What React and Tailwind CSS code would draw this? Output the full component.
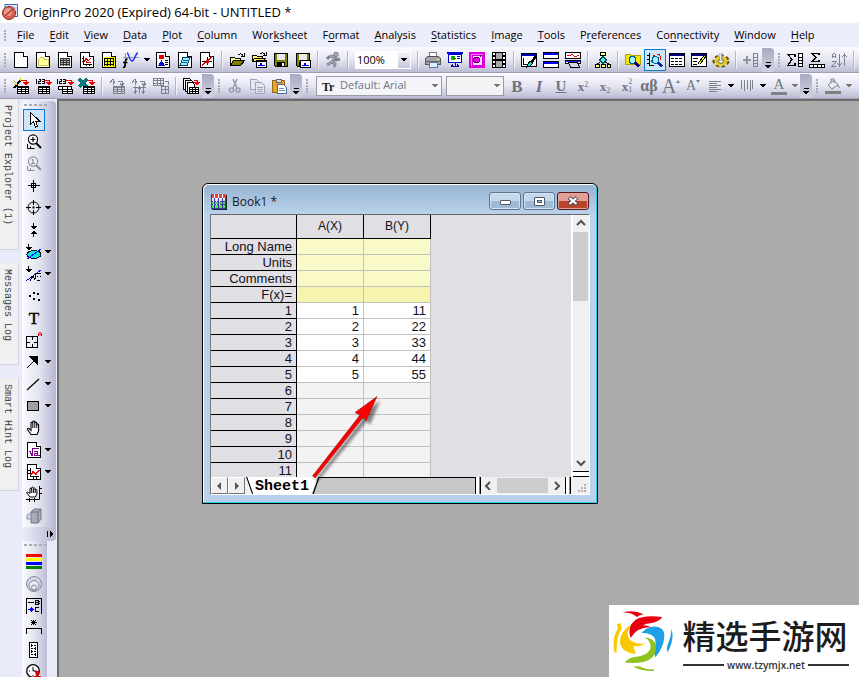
import React, { useState } from "react";
import clsx from "clsx";

const Svg = ({ children, size = 16, smooth = false }) => (
  <svg
    width={size}
    height={size}
    viewBox="0 0 16 16"
    fill="none"
    stroke="#000"
    shapeRendering={smooth ? "auto" : "crispEdges"}
    className="shrink-0 overflow-visible"
    aria-hidden="true"
  >
    {children}
  </svg>
);

const Doc = ({ fill = "#fff" }) => (
  <>
    <path d="M1.5 .5h9l4 4v11h-13z" fill={fill} />
    <path d="M10.5 .5v4h4" fill="#fff" />
  </>
);

const Grid = ({ x = 4, y = 8, fill = "#fff", color = "#000" }) => (
  <>
    <rect x={x + 0.5} y={y + 0.5} width="11" height="7" fill={fill} stroke={color} />
    <path d={`M${x} ${y + 1}h12M${x + 1} ${y + 3.5}h11M${x + 1} ${y + 5.5}h11M${x + 4.5} ${y}v8M${x + 8.5} ${y}v8`} stroke={color} />
  </>
);

const Floppy = () => (
  <>
    <path d="M1.5 1.5h13v13h-12l-1-1z" fill="#808000" />
    <path d="M4 2h8v6H4z" fill="#e8e8f0" stroke="none" />
    <path d="M4 10h8v5H4z" fill="#000" stroke="none" />
    <path d="M9 11h2v3H9z" fill="#fff" stroke="none" />
  </>
);

const Glass = ({ color = "#000", lens = "#fff", sign = "+" }) => (
  <>
    <path d="M10 9l5 5" stroke={color} strokeWidth="2" />
    <circle cx="7" cy="5.5" r="4.6" fill={lens} stroke={color} strokeWidth="1.1" />
    <path d={sign === "+" ? "M4.5 5.5h5M7 3v5" : "M5.5 3.5h1.5v4M5 7.5h4"} stroke={color} strokeWidth="1.2" />
    <path d="M1.5 10v4.5h7M4.5 12v2" stroke={color} />
  </>
);

const RedArrow = ({ x = 0 }) => (
  <>
    <path d={`M${8 + x} 2.5h5.500v2`} stroke="#e00" />
    <path d={`M${10 + x} 4h6l-3 4z`} fill="#e00" stroke="none" />
  </>
);

const g = "#7e828e";

const icons = {
  newProject: <Svg><Doc /></Svg>,
  newFolder: (
    <Svg><Doc /><path d="M3.5 7.5l2-2h3l1 2h4v6h-10z" fill="#ffffa0" stroke="#d2c850" /></Svg>
  ),
  newBook: (
    <Svg><Doc /><path d="M3 6h10v8H3z" fill="#bbb" stroke="none" /><path d="M3 6.5h10M3 8.5h10M3 10.5h10M3 12.5h10M3.5 6v8M6.5 6v8M9.5 6v8M12.5 6v8" stroke="#333" /></Svg>
  ),
  newGraph: (
    <Svg><Doc /><path d="M4.5 4v8.500H13M3 6.500h1M3 9.500h1M7.500 13v1M10.500 13v1" /><path d="M5 10l2-4 2 3 3-3M6 7l2 4 4-1" stroke="#e00000" /></Svg>
  ),
  newMatrix: (
    <Svg><Doc fill="#fff" /><path d="M3 5h11v10H3z" fill="#ffff00" stroke="none" /><path d="M3 6.5h10M3 9.5h10M3 12.5h10M3.5 6v8M6.5 6v8M9.5 6v8M12.5 6v8" /></Svg>
  ),
  newFunction: (
    <Svg smooth>
      <path d="M2.500 1v13M0 5.500h16" stroke="#999" />
      <path d="M4 1c2 0 2 8 5 8s3-8 6-8" stroke="#1030f0" strokeWidth="1.300" />
      <path d="M4.500 7.500c-2-1-2 1-2.200 3l-.3 3c-.3 2-1 2-2 1.500M0 10.500h4.500" strokeWidth="1.700" />
    </Svg>
  ),
  newLayout: (
    <Svg><Doc /><path d="M4 3h5v4H4z" fill="#e00" stroke="none" /><path d="M4 13l2.500-4L9 13z" fill="#00c" stroke="#00c" /><path d="M10 8.500h3M10 10.500h3M10 12.500h3" /></Svg>
  ),
  newNotes: (
    <Svg><Doc /><path d="M6 5.500h7l-3 8H3z" fill="#9feaf4" stroke="#046" /><path d="M6 8h5M5 10h5" stroke="#06a" /></Svg>
  ),
  newImage: (
    <Svg><Doc /><path d="M3 13L13 5" stroke="#e00" strokeWidth="1.500" /><path d="M3 9.500h10M8.500 5v8" /><path d="M7 8h3v3H7z" fill="#e00" stroke="none" /></Svg>
  ),
  open: (
    <Svg><path d="M1.500 13.500v-8h4l1 1h5v3" fill="#ffff88" /><path d="M1.500 13.500l3-5h11l-4 5z" fill="#808000" /><path d="M9 3c2-2 4-1 5 1M15 1v3.500h-3.500" /></Svg>
  ),
  openTemplate: (
    <Svg><path d="M1.500 9.500v-6h4l1 1h5v5" fill="#ffff88" /><path d="M1.500 9.500l2-3h11l-2 3z" fill="#ffe860" /><path d="M9 2c2-2 4-1 5 1M15 0v3.500h-3" /><path d="M5.500 8.500h10v7h-10z" fill="#fff" /><path d="M5 9h11" /><path d="M7 13h2v-2h1v2h4" stroke="#00f" /></Svg>
  ),
  save: <Svg><Floppy /></Svg>,
  saveTemplate: (
    <Svg><Floppy /><path d="M5.500 8.500h10v7h-10z" fill="#fff" /><path d="M7 13h2v-2h1v2h4" stroke="#00f" /></Svg>
  ),
  run: (
    <Svg smooth><circle cx="11" cy="2.500" r="2.300" fill="#aaaebb" stroke={g} /><path d="M5 4l5 1-3 5 3 2-1 3M7 10l-5 3M10 5l1 3 4-1M5 4L2 7" stroke={g} strokeWidth="3" /><path d="M5 4l5 1-3 5 3 2-1 3M7 10l-5 3" stroke="#aaaebb" /></Svg>
  ),
  print: (
    <Svg><path d="M4.500 .5h7v6h-7z" fill="#fff" stroke="#777" /><path d="M.5 6.500l2-2h11l2 2v6H.5z" fill="#a5a5aa" stroke="#555" /><path d="M1 9h14" stroke="#666" /><path d="M4 10h8v5.500H4z" fill="#d8f0ff" stroke="#67a" /><path d="M12 7.500h2" stroke="#ff0" /></Svg>
  ),
  slides: (
    <Svg><path d="M0 1h16" stroke="#00c" strokeWidth="2" /><path d="M1.500 2h13v8h-13z" fill="#fff" stroke="#0000c0" /><circle cx="6" cy="6" r="2.500" fill="#0b0" stroke="none" /><path d="M6 3.500v2.500h2.500" stroke="#e00" /><path d="M10 4.500h3M10 6.500h3" stroke="#00c" /><path d="M8 10v4M4 14.500h8M6 12l-2 3M10 12l2 3" stroke="#0000a0" /></Svg>
  ),
  snapshot: (
    <Svg><path d="M1 1h14v14H1z" fill="#f7f" stroke="#e000e0" strokeWidth="2" /><path d="M3 3h10v10H3z" fill="#ffd8ff" stroke="#c0c" /><circle cx="7.500" cy="8" r="3" fill="#e000e0" stroke="#505" /><path d="M11 3v2" stroke="#505" /></Svg>
  ),
  film: (
    <Svg><path d="M1 0h14v16H1z" fill="#000" stroke="none" /><path d="M5 1h6v6H5zM5 9h6v6H5z" fill="#a8a8a8" stroke="none" /><path d="M3 1v14M13 1v14" stroke="#fff" strokeWidth="2" strokeDasharray="2 2" /></Svg>
  ),
  digitize: (
    <Svg><path d="M.5 1.500h15v13H.5z" fill="#fff" /><path d="M1 3h14" stroke="#0000c0" strokeWidth="2" /><path d="M2 6v6M2 12.500h5" /><path d="M15 4l-5 7" strokeWidth="2.500" /><path d="M9 9l3 2-3 3-3 1 1-3z" fill="#10dede" /></Svg>
  ),
  tile: (
    <Svg><path d="M.5 .5h15v6H.5zM.5 9.500h15v6H.5z" fill="#fff" /><path d="M1 2h14M1 11h14" stroke="#00f" strokeWidth="2" /></Svg>
  ),
  stack: (
    <Svg><path d="M.5 .5h15v6H.5zM.5 8.500h15v3H.5z" fill="#fff" /><path d="M2 3l3 1 2-2 3 3 4-2" stroke="#e00" /><path d="M1 9.500h14" stroke="#22f" /><path d="M3.500 10.500h9l2 5h-9z" fill="#d6d6e4" /></Svg>
  ),
  hierarchy: (
    <Svg><path d="M8 4v3M2.500 12l5-4 6 4" /><path d="M5.500 .5h5v3h-5z" fill="#ffff70" /><path d="M8 4.500l3.500 3.500L8 11.500 4.500 8z" fill="#6de" stroke="#055" /><path d="M.5 12.500h4v3h-4zM6.500 12.500h4v3h-4zM12 12.500h3.500v3H12z" fill="#ffff70" /></Svg>
  ),
  findFolder: (
    <Svg><path d="M.5 2.500h5l1 1h9v9H.5z" fill="#f5e800" stroke="#b0a400" /><circle cx="7.500" cy="8" r="3.500" fill="#a5f2fa" stroke="#068" /><path d="M10 10.500l4 4" stroke="#000080" strokeWidth="2.500" /></Svg>
  ),
  findGraph: (
    <Svg><path d="M2.500 1v12.500H7M0 3.500h3M0 7.500h3M0 11.500h3" /><path d="M4 10l3-7 1 2M10 3l2-1 1 2v4" stroke="#e00" /><circle cx="8.500" cy="8" r="3.300" fill="#a5f2fa" stroke="#068" /><path d="M11 10.500l4 4" stroke="#1020a0" strokeWidth="2.500" /></Svg>
  ),
  results: (
    <Svg><path d="M.5 1.500h15v13H.5z" fill="#fff" /><path d="M1 3h14" stroke="#000080" strokeWidth="2" /><path d="M2 6.500h12M2 9.500h12M2 12.500h12" strokeDasharray="3 1" /></Svg>
  ),
  script: (
    <Svg><path d="M.5 1.500h15v13H.5z" fill="#fff" /><path d="M1 3h14" stroke="#000080" strokeWidth="2" /><path d="M2 6.500h5M2 9.500h4M2 12.500h4" /><path d="M14 4l-6 8" stroke="#000" strokeWidth="3" /><path d="M14 4l-6 8" stroke="#ff0" /></Svg>
  ),
  gear: (
    <Svg smooth>
      <ellipse cx="8" cy="9" rx="6.500" ry="4.500" stroke="#5f5200" strokeWidth="4" strokeDasharray="3 2" />
      <ellipse cx="8" cy="9" rx="5.500" ry="4" fill="#d8c020" stroke="#e8d030" strokeWidth="2" />
      <ellipse cx="8" cy="9.500" rx="2.500" ry="1.800" fill="#fff" stroke="#665" />
      <path d="M8 1v7" stroke="#999" strokeWidth="3" /><path d="M7.500 1v7" stroke="#eee" />
    </Svg>
  ),
  addColumn: (
    <Svg><path d="M0 8h8M4 4v8" stroke="#92959e" strokeWidth="2" /><path d="M10.500 1.500h4v13h-4zM10 5.500h5M10 8.500h5M10 11.500h5" stroke={g} /></Svg>
  ),
  sumColumn: (
    <Svg><path d="M8 5V2.500H1l4 5-4 6h7V11" strokeWidth="1.400" /><path d="M11.500 1.500h4v13h-4zM11 5.500h5M11 8.500h5M11 11.500h5" fill="#fff" /></Svg>
  ),
  sumRow: (
    <Svg><path d="M10 3V1.500H3l4 4-4 4h7V8" strokeWidth="1.400" /><path d="M.5 12.500h15v3H.5zM4.500 12v3M8.500 12v3M12.500 12v3" fill="#fff" /></Svg>
  ),
  sort: (
    <Svg><path d="M1.500 6V2.500l1-1h1l1 1V6M1 4.500h4M1 9.500h4L1 14.500h4M8.500 2v12M6.500 11l2 3 2-3M13.500 14V2M11.500 5l2-3 2 3" stroke={g} /></Svg>
  ),

  wizard: (
    <Svg><path d="M1 10l7-8" strokeWidth="2" /><path d="M0 2l3 3M7 0v3M1 6h3" stroke="#d8c800" /><RedArrow /><Grid /></Svg>
  ),
  import1: (
    <Svg><path d="M1.500 1v5M3.500 1.500h2v2h-2v2h2.500M7 1.500h2v4H7M7 3.500h2" /><RedArrow x={1} /><Grid x={3} /></Svg>
  ),
  import2: (
    <Svg><path d="M.5 1v5M2.500 1.500h2v2h-2v2H5M6 1.500h2v4H6M6 3.500h2" /><RedArrow x={1} /><path d="M1.500 8.500h13v3h-13zM5.500 8v4M10.500 8v4" fill="#fff" /><path d="M5.500 11.500h10v4h-10zM5 13.500h11M10.500 11v5" fill="#fff" /></Svg>
  ),
  importExcel: (
    <Svg><path d="M0 1l8 8M8 1L0 9" stroke="#087878" strokeWidth="3" /><RedArrow /><Grid /></Svg>
  ),
  transfer1: (
    <Svg><path d="M1 5l3-4 2 4M4 3v4M9 3h4v4M11 5l2 3 2-3" stroke={g} /><Grid fill="#d5d7e4" color={g} /></Svg>
  ),
  transfer2: (
    <Svg><path d="M1 5l3-4 2 4M4 3v4M9 3h4v4M11 5l2 3 2-3M2 9.500h13M4.500 8v7M8.500 8v7M12.500 8v7M3 13l1.500 2L6 13M7 11l1.500-2 1.500 2M11 13l1.500 2 1.500-2" stroke={g} /></Svg>
  ),
  transfer3: (
    <Svg><path d="M.5 .5h10v7H.5zM0 2.500h11M0 5.500h11M4.500 0v8M7.500 0v8M12 3.500h3v3M8.500 8.500h7v7h-7zM8 11.500h8M12.500 8v8" stroke={g} /></Svg>
  ),
  duplicate: (
    <Svg><path d="M.5 .5h6l2 2v9h-8z" fill="#fff" /><path d="M2.500 2.500h6l2 2v9h-8z" fill="#fff" /><path d="M4.500 4.500h5l2 2v9h-7z" fill="#fff" /><path d="M11 2.500h3v2" stroke="#e00" /><path d="M11 4h6l-3 4z" fill="#e00" stroke="none" /><path d="M6.500 9.500h9v6h-9zM6 11.500h10M6 13.500h10M9.500 9v7M12.500 9v7" fill="#fff" /></Svg>
  ),
  cut: (
    <Svg smooth><path d="M6 1l4 9M10 1L6 10" stroke="#999cab" strokeWidth="1.600" /><circle cx="4.500" cy="12" r="2" stroke="#999cab" strokeWidth="1.500" /><circle cx="11" cy="12" r="2" stroke="#999cab" strokeWidth="1.500" /></Svg>
  ),
  copy: (
    <Svg><path d="M1.500 1.500h6l2 2v8h-8z" fill="#e4e6f0" stroke="#a0a3b5" /><path d="M6.500 4.500h6l3 3v8h-9z" fill="#e4e6f0" stroke="#a0a3b5" /><path d="M8 9.500h6M8 11.500h6M8 13.500h6" stroke="#a0a3b5" /></Svg>
  ),
  paste: (
    <Svg><path d="M1.500 2.500h12v12h-12z" fill="#e5a52c" stroke="#96681c" /><path d="M5 1h5v3H5z" fill="#ddd" stroke="#666" /><path d="M6.500 6.500h6l3 3v6h-9z" fill="#fff" stroke="#4a6a9a" /><path d="M8 10.500h5M8 12.500h6" stroke="#6a8ac0" /></Svg>
  ),
  alignLeft: (
    <Svg><path d="M2 3.500h12M2 5.500h8M2 7.500h12M2 9.500h8M2 11.500h12M2 13.500h8" stroke={g} /></Svg>
  ),
  spacing: (
    <Svg><path d="M2.500 2v9M5.500 2v11M8.500 2v9M11.500 2v11M13.500 2v9" stroke={g} /></Svg>
  ),
  fill: (
    <Svg smooth><path d="M3 7l6-5 4 5-6 4z" fill="#e8e9f2" stroke={g} /><path d="M6 5V1h3v4M13 7l1.500 3" stroke={g} /><path d="M0 13h16v3H0z" fill="#808080" stroke="none" /></Svg>
  ),

  pointer: (
    <Svg><path d="M4.500 .5v12l3-3 2 5.500 2-1-2-5h4z" fill="#fff" /></Svg>
  ),
  zoomIn: <Svg smooth><Glass /></Svg>,
  zoomOut: <Svg smooth><Glass color="#8b8d99" lens="#eceef6" sign="1" /></Svg>,
  reader: (
    <Svg><path d="M7.500 2v12M2 7.500h12M5.500 5.500h4v4h-4z" /></Svg>
  ),
  cursor: (
    <Svg smooth><circle cx="7.500" cy="7.500" r="5.500" /><path d="M7.500 0v5M7.500 10v5M0 7.500h5M10 7.500h5" /><path d="M6.500 6.500h2v2h-2z" fill="#000" stroke="none" /></Svg>
  ),
  selector: (
    <Svg><path d="M7.500 1v4M7.500 11v4" /><path d="M4 4h7L7.500 7.500zM4 12h7L7.500 8.500z" fill="#000" stroke="none" /></Svg>
  ),
  mask: (
    <Svg><path d="M2.500 0v3" /><path d="M-1 3h7L2.500 6.500z" fill="#000" stroke="none" /><ellipse cx="8" cy="10.500" rx="7" ry="4" fill="#00e8e8" /><path d="M1 15L15 5" stroke="#00f" /></Svg>
  ),
  regional: (
    <Svg><path d="M2.500 0v3" /><path d="M-1 3h7L2.500 6.500z" fill="#000" stroke="none" /><path d="M0 15L15 4" stroke="#00f" /><path d="M4 14.500l3-4 2 3 1-6h5M11 10.500h1M14 10.500h1M11 14h3" /></Svg>
  ),
  draw: (
    <Svg><path d="M3 7h2v2H3zM7 4h2v2H7zM11 5h2v2h-2zM7 10h2v2H7zM12 11h2v2h-2z" fill="#000" stroke="none" /></Svg>
  ),
  annotation: (
    <Svg><path d="M.5 4.500h11v11H.5zM6.500 5v3M6.500 12v4M1 10.500h3M8 10.500h3" /><path d="M12.500 4V1.500l1-1h1l1 1V4M12 2.500h4" stroke="#e00" /></Svg>
  ),
  arrowTool: (
    <Svg><path d="M1 14L10 5" /><path d="M4 2.500h7.500V10z" fill="#000" /></Svg>
  ),
  lineTool: <Svg smooth><path d="M1 14L13 3" strokeWidth="1.200" /></Svg>,
  rectTool: <Svg><path d="M1.500 3.500h11v9h-11z" fill="#a0a0a0" /></Svg>,
  hand: (
    <Svg smooth><path d="M5 14.500L1.500 9.500c-.5-1 .7-1.600 1.600-.8L5 10.500V3.300c0-1.200 1.600-1.200 1.700 0V2c0-1.300 1.900-1.300 2 0v1c.2-1.200 1.900-1.100 2 .1v1.600c.2-1.100 1.800-1 1.900.2V11l-1.600 3.500z" fill="#fff" strokeWidth="1.100" /><path d="M6.800 3v5M8.800 3v5M10.800 4v4" /></Svg>
  ),
  equation: (
    <Svg><Doc /><path d="M3 9.500h1l2 4v-7h7" stroke="#800090" /><path d="M8 9.500h3v4H8.500v-2H11M11.500 13.500h2" stroke="#800090" /></Svg>
  ),
  graphObject: (
    <Svg><Doc /><path d="M4 4v8.500H13M2 6.500h2M2 9.500h2M7.500 12v3M10.500 12v3" /><path d="M5 11l2-3 3 2 3-4" stroke="#e00" strokeWidth="1.500" /></Svg>
  ),
  scale: (
    <Svg smooth><path d="M4 11L.8 7c-.4-1 .7-1.400 1.500-.6L4 7.500V3c0-1.200 1.500-1.200 1.600 0V2c0-1.200 1.700-1.200 1.800 0v.6c.2-1 1.700-1 1.800.2V4c.2-1 1.600-.9 1.700.2V8l-1.500 3z" fill="#fff" /><path d="M5.700 3v4M7.400 3v4M9.200 3v4M0 13.500h13.500V0M13 2.500h3M13 7.500h3M3.500 12v4M8.500 12v4" /></Svg>
  ),
  cube: (
    <Svg smooth><path d="M5 4l3-3h7v10l-3 4H5z" fill="#a8acba" stroke="#73757e" /><path d="M5 4h7v11M12 4l3-3" stroke="#73757e" /><path d="M1 7l4-2v6H1z" fill="#d4d7e4" stroke="#8d90a0" /></Svg>
  ),
  palette: (
    <Svg><path d="M0 1.500h16" stroke="#f00" strokeWidth="3" /><path d="M0 5.500h16" stroke="#ff0" strokeWidth="3" /><path d="M0 9.500h16" stroke="#00f" strokeWidth="3" /><path d="M0 13.500h16" stroke="#008000" strokeWidth="3" /></Svg>
  ),
  rings: (
    <Svg smooth><circle cx="8" cy="8" r="7.500" fill="#d5d8e8" stroke="#858894" /><circle cx="8" cy="9.500" r="5" fill="#e7e9f4" stroke="#858894" /><circle cx="8" cy="11.500" r="2.500" stroke="#858894" /></Svg>
  ),
  legend: (
    <Svg><path d="M.5 16V.5h15V16M2 4.500h6" /><path d="M9.500 2.500v4M9 2.500h3l1 1-1 1 1 1-1 1H9M10 4.500h2M13 9.500h-3l-1 1v2l1 1h3" /><path d="M2 11.500h6M4 10.500h3M4 12.500h3M5.500 9v5" stroke="#00f" /></Svg>
  ),
  bracket: (
    <Svg><path d="M7.500 0v5M4.500 2.500h6M5 0l5 5M10 0L5 5M.5 14V8.500h15V14" /></Svg>
  ),
  ruler: (
    <Svg><path d="M3.500 .5h8v15h-8zM5 3.500h2M8 3.500h2M5 6.500h2M8 6.500h2M5 9.500h2M8 9.500h2M5 12.500h2M8 12.500h2M5.500 2v3M9.500 5v3M5.500 8v3M9.500 11v3" fill="#fff" /></Svg>
  ),
  clock: (
    <Svg smooth><circle cx="7" cy="7" r="6.300" fill="#fff" strokeWidth="1.300" /><path d="M7 3v4h4M3 7h1M7 11v1" /><path d="M9 7h4v2l-1 3h3v2H8v-2h2z" fill="#e00000" stroke="none" /><path d="M7 15.500h9" stroke="#600" strokeWidth="2" /></Svg>
  ),
};

const menus = [
  ["", "F", "ile"],
  ["", "E", "dit"],
  ["", "V", "iew"],
  ["", "D", "ata"],
  ["", "P", "lot"],
  ["", "C", "olumn"],
  ["Wor", "k", "sheet"],
  ["F", "o", "rmat"],
  ["", "A", "nalysis"],
  ["", "S", "tatistics"],
  ["", "I", "mage"],
  ["", "T", "ools"],
  ["P", "r", "eferences"],
  ["Co", "n", "nectivity"],
  ["", "W", "indow"],
  ["", "H", "elp"],
];

const Grip = ({ vertical = false, dots = 5 }) => (
  <div
    className={clsx(
      "flex shrink-0 items-center justify-center",
      vertical ? "h-[8px] w-[24px] gap-[2px]" : "w-[10px] flex-col gap-px"
    )}
  >
    {Array.from({ length: dots }, (_, i) => (
      <span key={i} className={clsx("h-[2px] bg-[#a9abb8]", vertical ? "w-[3px]" : "w-[2px]")} />
    ))}
  </div>
);

const Sep = () => <div className="mx-[3px] h-[18px] w-[2px] shrink-0 border-l border-[#b4b6c8] bg-white/70" />;

const Caret = ({ gray = false }) => (
  <svg width="6" height="4" viewBox="0 0 6 4" className="shrink-0" shapeRendering="crispEdges" aria-hidden="true">
    <path d="M0 0h6L3 3.500z" fill={gray ? "#777" : "#000"} />
  </svg>
);

const Drop = ({ label, gray, narrow }) => (
  <button
    type="button"
    aria-label={label}
    className={clsx("flex h-[22px] shrink-0 items-center justify-center", narrow ? "w-[6px]" : "w-[10px]")}
  >
    <Caret gray={gray} />
  </button>
);

const Overflow = () => (
  <button
    type="button"
    aria-label="Toolbar options"
    className="flex w-[12px] shrink-0 flex-col items-center justify-end gap-[2px] self-stretch rounded-r-sm bg-gradient-to-b from-[#a9aac0] to-[#d2d3e2] pb-[3px]"
  >
    <span className="h-px w-[5px] bg-black" />
    <Caret />
  </button>
);

const Tool = ({ name, active, onClick, children }) => (
  <button
    type="button"
    aria-label={name}
    onClick={onClick}
    className={clsx(
      "flex size-[22px] shrink-0 items-center justify-center border",
      active ? "border-[#0a78d7] bg-[#cfe6f8]" : "border-transparent"
    )}
  >
    {children ?? icons[name]}
  </button>
);

const Tools = ({ names }) => names.map((n) => <Tool key={n} name={n} />);

const Letter = ({ className, children }) => (
  <span className={clsx("font-['Liberation_Serif',serif] leading-none text-[#70747f]", className)}>{children}</span>
);

const barClass =
  "flex h-[26px] items-center overflow-hidden border-b border-[#9c9eb2] bg-gradient-to-b from-[#fafaff] via-[#e6e7f2] to-[#bcbdd4] pt-px";

const StandardBar = () => (
  <div className={barClass}>
    <Grip />
    <Tools names={["newProject", "newFolder", "newBook", "newGraph", "newMatrix", "newFunction"]} />
    <Drop label="New function options" />
    <Tools names={["newLayout", "newNotes", "newImage"]} />
    <Sep />
    <Tools names={["open", "openTemplate", "save", "saveTemplate"]} />
    <Sep />
    <Tools names={["run"]} />
    <Sep />
    <div className="mx-[3px] flex h-[18px] w-[56px] shrink-0 items-center bg-white">
      <input
        aria-label="Zoom"
        defaultValue="100%"
        className="w-[43px] min-w-0 bg-transparent pl-[2px] font-['Open_Sans',sans-serif] text-[11px] text-black outline-none"
      />
      <button type="button" aria-label="Zoom levels" className="flex h-[16px] w-[12px] items-center justify-center bg-gradient-to-b from-[#f4f4fb] to-[#c6c7da]">
        <Caret />
      </button>
    </div>
    <Sep />
    <Tools names={["print", "slides", "snapshot", "film"]} />
    <Sep />
    <Tools names={["digitize", "tile", "stack"]} />
    <Sep />
    <Tools names={["hierarchy"]} />
    <Sep />
    <Tool name="findFolder" />
    <Tool name="findGraph" active />
    <Tools names={["results", "script", "gear"]} />
    <Sep />
    <Tools names={["addColumn"]} />
    <Overflow />
    <Grip />
    <Tools names={["sumColumn", "sumRow", "sort"]} />
    <Sep />
  </div>
);

const FormatBar = () => (
  <div className={barClass}>
    <Grip />
    <Tools names={["wizard", "import1", "import2", "importExcel"]} />
    <Sep />
    <Tools names={["transfer1", "transfer2", "transfer3"]} />
    <Sep />
    <Tools names={["duplicate"]} />
    <Overflow />
    <Grip />
    <Tools names={["cut", "copy", "paste"]} />
    <Overflow />
    <Grip />
    <div className="relative ml-[4px] h-[20px] w-[126px] shrink-0">
      <select
        aria-label="Font"
        className="block h-full w-full appearance-none border border-[#9a9ba3] bg-[#f3f5fb] pb-[2px] pl-[23px] font-['Open_Sans',sans-serif] text-[11px] leading-[16px] text-[#70737c]"
      >
        <option>Default: Arial</option>
      </select>
      <span className="pointer-events-none absolute left-[6px] top-[4px] font-['Liberation_Serif',serif] text-[12px] font-bold leading-[14px] text-[#222]">
        Tr
      </span>
      <span className="pointer-events-none absolute right-[4px] top-[8px]"><Caret gray /></span>
    </div>
    <div className="relative ml-[4px] mr-[2px] h-[20px] w-[58px] shrink-0">
      <select aria-label="Font size" className="block h-full w-full appearance-none border border-[#9a9ba3] bg-[#f3f3f6]" />
      <span className="pointer-events-none absolute right-[4px] top-[8px]"><Caret gray /></span>
    </div>
    <Tool name="Bold"><Letter className="text-[17px] font-bold">B</Letter></Tool>
    <Tool name="Italic"><Letter className="text-[17px] font-bold italic">I</Letter></Tool>
    <Tool name="Underline"><Letter className="text-[15px] font-bold underline">U</Letter></Tool>
    <Tool name="Superscript"><Letter className="text-[13px] font-bold">x<sup className="text-[8px] font-normal">2</sup></Letter></Tool>
    <Tool name="Subscript"><Letter className="text-[13px] font-bold">x<sub className="text-[8px] font-normal">2</sub></Letter></Tool>
    <Tool name="Supersubscript">
      <Letter className="text-[13px] font-bold">x</Letter>
      <Letter className="flex flex-col text-[8px]"><span>2</span><span>1</span></Letter>
    </Tool>
    <Tool name="Greek"><Letter className="text-[16px] font-bold">αβ</Letter></Tool>
    <Tool name="Increase font"><Letter className="text-[20px]">A</Letter><span className="mb-[10px]"><svg width="4" height="3" aria-hidden="true"><path d="M0 3h4L2 0z" fill={g} /></svg></span></Tool>
    <Tool name="Decrease font"><Letter className="text-[14px]">A</Letter><span className="mb-[10px]"><svg width="4" height="3" aria-hidden="true"><path d="M0 0h4L2 3z" fill={g} /></svg></span></Tool>
    <Tool name="alignLeft" />
    <Drop label="Alignment options" />
    <Tool name="spacing" />
    <Drop label="Spacing options" />
    <Tool name="Font color">
      <span className="flex flex-col items-center">
        <Letter className="text-[15px]">A</Letter>
        <span className="h-[3px] w-[16px] bg-[#808080]" />
      </span>
    </Tool>
    <Drop label="Font color options" gray />
    <Overflow />
    <Grip />
    <Tool name="fill" />
    <Drop label="Fill color options" gray />
  </div>
);

const sideTools = [
  ["pointer"],
  ["zoomIn"],
  ["zoomOut"],
  ["reader"],
  ["cursor", true],
  ["selector"],
  ["mask", true],
  ["regional", true],
  ["draw"],
  ["text"],
  ["annotation"],
  ["arrowTool", true],
  ["lineTool", true],
  ["rectTool", true],
  ["hand"],
  ["equation", true],
  ["graphObject", true],
  ["scale"],
  ["cube"],
];

const SideBars = () => {
  const [tool, setTool] = useState("pointer");
  return (
    <div className="w-[35px] shrink-0 overflow-hidden">
      <div className="w-[34px] rounded-t-sm bg-gradient-to-r from-[#fafaff] via-[#e3e4f0] to-[#b6b7cf] pl-px">
        <Grip vertical />
        {sideTools.map(([name, drop]) => (
          <div key={name} className="flex items-center">
            <Tool name={name} active={tool === name} onClick={() => setTool(name)}>
              {name === "text" ? (
                <span className="font-['Liberation_Serif',serif] text-[17px] leading-none [-webkit-text-stroke:0.4px_#000]">T</span>
              ) : undefined}
            </Tool>
            {drop && <Drop label={`${name} options`} narrow />}
          </div>
        ))}
      </div>
      <button
        type="button"
        aria-label="More tools"
        className="flex h-[14px] w-[34px] items-center justify-end rounded-b-sm bg-gradient-to-r from-[#ecedfb] to-[#b6b7cf] pr-[2px]"
      >
        <svg width="7" height="6" shapeRendering="crispEdges" aria-hidden="true">
          <path d="M0 0h1v6H0zM3 0l4 3-4 3z" />
        </svg>
      </button>
      <div className="flex w-[25px] flex-col bg-gradient-to-r from-[#fafaff] via-[#e3e4f0] to-[#bcbdd4] pl-px">
        <div className="pb-[2px]"><Grip vertical /></div>
        <Tools names={["palette", "rings", "legend", "bracket", "ruler", "clock"]} />
      </div>
    </div>
  );
};

const DockTab = ({ label, className }) => (
  <button
    type="button"
    className={clsx(
      "flex w-[19px] items-center justify-start border-b border-r border-[#d2d3dc] bg-[#f0f0f0] pr-[5px] pt-[6px] font-['Liberation_Mono',monospace] text-[10px] leading-[14px] text-[#404040] [writing-mode:vertical-rl]",
      className
    )}
  >
    {label}
  </button>
);

const labelRows = ["Long Name", "Units", "Comments", "F(x)="];
const dataRows = [
  [1, 11],
  [2, 22],
  [3, 33],
  [4, 44],
  [5, 55],
  [],
  [],
  [],
  [],
  [],
  [],
];

const headCell = "border-b border-r border-black bg-[#e0dfe4] font-normal";
const rowHead = clsx(headCell, "h-[16px] pr-[4px] text-right");

const Worksheet = () => (
  <table className="w-[220px] table-fixed border-separate border-spacing-0 font-['Liberation_Sans',Arial,sans-serif] text-[13px] leading-[15px] text-[#101020]">
    <thead>
      <tr className="h-[24px] text-[12px]">
        <th className={clsx(headCell, "w-[86px]")} aria-label="Row" />
        <th className={clsx(headCell, "w-[67px]")}>A(X)</th>
        <th className={clsx(headCell, "w-[67px]")}>B(Y)</th>
      </tr>
    </thead>
    <tbody>
      {labelRows.map((label) => (
        <tr key={label}>
          <th className={rowHead}>{label}</th>
          {[0, 1].map((c) => (
            <td
              key={c}
              className={clsx("border-b border-r border-[#c0c0c0]", label === "F(x)=" ? "bg-[#f7f4b0]" : "bg-[#fafac8]")}
            />
          ))}
        </tr>
      ))}
      {dataRows.map((row, i) => (
        <tr key={i}>
          <th className={rowHead}>{i + 1}</th>
          {[0, 1].map((c) => (
            <td
              key={c}
              className={clsx("border-b border-r border-[#c0c0c0] pr-[4px] text-right", row.length ? "bg-white" : "bg-[#f3f3f3]")}
            >
              {row[c]}
            </td>
          ))}
        </tr>
      ))}
    </tbody>
  </table>
);

const Chevron = ({ dir }) => {
  const paths = {
    up: "M1 6l4-4 4 4",
    down: "M1 3l4 4 4-4",
    left: "M6 1L2 5l4 4",
    right: "M3 1l4 4-4 4",
  };
  return (
    <svg width="10" height="9" viewBox="0 0 10 9" fill="none" stroke="#505050" strokeWidth="2" aria-hidden="true">
      <path d={paths[dir]} />
    </svg>
  );
};

const winButton =
  "flex h-[18px] w-[32px] items-center justify-center rounded-[3px] border border-[#5f7692] bg-gradient-to-b from-[#c5d8ea] from-50% to-[#9fbad4] to-50% shadow-[inset_0_0_0_1px_#d5e4f2]";

const BookWindow = () => (
  <section className="absolute left-[143px] top-[82px] flex h-[321px] w-[396px] flex-col rounded-t-[6px] border border-black bg-[#b9d1ea] shadow-[inset_-1px_-1px_0_#28d0ee,inset_1px_1px_0_#fff]">
    <header className="mx-px mt-px flex h-[29px] items-center rounded-t-[5px] bg-gradient-to-b from-[#98b4d2] to-[#bad2eb] px-[7px]">
      <svg width="16" height="16" viewBox="0 0 16 16" shapeRendering="crispEdges" className="mt-[4px]" aria-hidden="true">
        <path d="M1 1h15v15H1z" fill="#222" />
        <path d="M0 0h15v4H0z" fill="#e84040" />
        <path d="M0 4h15v3H0z" fill="#e6dcfa" />
        <path d="M0 7h15v8H0z" fill="#4fdc4f" />
        <path d="M3.500 0v15M7.500 0v15M11.500 0v15M0 4.500h15M0 7.500h15M0 10.500h15" stroke="#fff" />
        <path d="M.5 0v15M3.500 4v11M7.500 4v11M11.500 4v11M14.500 4v11M0 14.500h15" stroke="#3a3aa8" />
        <path d="M0 7.500h15M0 10.500h15" stroke="#3a3aa8" strokeDasharray="2 1" />
      </svg>
      <h1 className="ml-[5px] mt-[5px] flex-1 font-['Open_Sans',sans-serif] text-[12px] leading-[16px] text-[#1a1a1a]">Book1 *</h1>
      <div className="mt-[3px] flex gap-[2px]">
        <button type="button" aria-label="Minimize" className={winButton}>
          <span className="mt-[2px] h-[5px] w-[11px] rounded-[1px] border border-[#4d5a6a] bg-white" />
        </button>
        <button type="button" aria-label="Maximize" className={winButton}>
          <span className="flex h-[9px] w-[11px] items-center justify-center rounded-[1px] border border-[#4d5a6a] bg-white">
            <span className="h-[3px] w-[5px] border border-[#4d5a6a] bg-[#a9c3dc]" />
          </span>
        </button>
        <button
          type="button"
          aria-label="Close"
          className="flex h-[18px] w-[32px] items-center justify-center rounded-[3px] border border-[#4f1520] bg-gradient-to-b from-[#e3a094] from-50% to-[#b9442c] to-50% shadow-[inset_0_0_0_1px_#e2a596]"
        >
          <svg width="12" height="10" viewBox="0 0 12 10" fill="none" aria-hidden="true">
            <path d="M2 1.500l8 7M10 1.500l-8 7" stroke="#4d4a5a" strokeWidth="4" />
            <path d="M2.500 2l7 6M9.500 2l-7 6" stroke="#fff" strokeWidth="2.200" />
          </svg>
        </button>
      </div>
    </header>

    <div className="mx-[7px] mb-[8px] flex min-h-0 flex-1 flex-col border border-b-white border-l-[#777] border-r-white border-t-[#666] bg-[#e0dfe4]">
      <div className="flex min-h-0 flex-1">
        <div className="flex-1 overflow-hidden">
          <Worksheet />
        </div>
        <div className="flex w-[18px] flex-col border-l-2 border-white bg-[#f0f0f0]">
          <button type="button" aria-label="Scroll up" className="flex h-[17px] items-center justify-center"><Chevron dir="up" /></button>
          <div className="flex-1">
            <div className="h-[69px] w-[15px] bg-[#cdcdcd]" />
          </div>
          <button type="button" aria-label="Scroll down" className="flex h-[17px] items-center justify-center"><Chevron dir="down" /></button>
          <div className="h-[6px] border-y border-black bg-white" />
        </div>
      </div>

      <div className="flex h-[17px] shrink-0">
        {["M6 1L2 5l4 4z", "M3 1l4 4-4 4z"].map((d, i) => (
          <button
            key={d}
            type="button"
            aria-label={i ? "Next sheet" : "Previous sheet"}
            className="flex w-[17px] items-center justify-center border border-b-[#777] border-l-white border-r-[#777] border-t-white bg-[#f0f0f0]"
          >
            <svg width="9" height="10" aria-hidden="true"><path d={d} fill="#555" /></svg>
          </button>
        ))}
        <div className="flex flex-1 border-r border-t border-black bg-[#c8c8c8]">
          <button type="button" className="relative mt-[-1px] flex h-[17px] w-[74px] items-center justify-center">
            <svg width="74" height="17" viewBox="0 0 74 17" className="absolute inset-0" aria-hidden="true">
              <path d="M0 0h74l-6 17H6z" fill="#fff" />
              <path d="M1.500 0l6 17M74 0l-6 17" stroke="#000" strokeWidth="1.400" />
              <path d="M0 0v17h7L1 0z" fill="#f0f0f0" />
            </svg>
            <span className="relative pt-px font-['Liberation_Mono',monospace] text-[15px] font-bold leading-[17px] text-black">Sheet1</span>
          </button>
        </div>
        <div className="w-[4px] border-r border-[#888] bg-white" />
        <div className="flex w-[86px] items-center border-x border-black bg-[#f0f0f0]">
          <button type="button" aria-label="Scroll left" className="flex w-[16px] items-center justify-center"><Chevron dir="left" /></button>
          <div className="h-[15px] flex-1 bg-[#cdcdcd]" />
          <button type="button" aria-label="Scroll right" className="flex w-[17px] items-center justify-center"><Chevron dir="right" /></button>
        </div>
        <div className="w-[4px] border-r border-[#888] bg-white" />
        <div className="flex w-[19px] items-end justify-end border-l border-black bg-[#f0f0f0] pb-[2px] pr-[3px]">
          <svg width="8" height="8" aria-hidden="true">
            <path d="M6 0h2v2H6zM3 3h2v2H3zM6 3h2v2H6zM0 6h2v2H0zM3 6h2v2H3zM6 6h2v2H6z" fill="#b4b4b4" />
          </svg>
        </div>
      </div>
    </div>
  </section>
);

const Watermark = () => (
  <aside className="absolute bottom-0 right-0 flex h-[72px] w-[250px] items-center bg-white pl-[4px]">
    <svg width="60" height="62" viewBox="39 30 180 186" className="shrink-0" aria-hidden="true">
      <path d="M66 38Q100 28 131 43Q117 45 111 51Q92 36 66 38z" fill="#e60012" />
      <path d="M92 114Q80 80 106 60Q130 44 187 51Q178 64 156 69Q140 70 128 76Q146 76 152 82Q112 80 92 114z" fill="#e60012" />
      <path d="M124 99Q148 72 176 82Q194 88 193 108Q192 142 166 172Q160 158 164 144Q174 112 150 103Q138 98 124 99z" fill="#1ea0e6" />
      <path d="M215 87Q224 118 203 157Q198 146 203 134Q213 112 215 87z" fill="#1ea0e6" />
      <path d="M133 112Q170 116 168 147Q165 178 130 186Q100 191 74 187Q84 175 104 171Q148 166 152 142Q153 122 133 112z" fill="#8fc31f" />
      <path d="M100 200Q118 196 128 203Q144 209 162 208L162 213Q125 214 100 200z" fill="#8fc31f" />
      <path d="M94 72Q74 104 90 120Q108 134 136 130Q120 142 100 138Q102 148 108 162Q68 160 60 130Q56 98 94 72z" fill="#f8c800" />
      <path d="M62 70Q62 80 66 84Q48 110 50 158L44 158Q34 118 54 84L50 72z" fill="#f8c800" />
    </svg>
    <div className="ml-[8px] flex flex-1 flex-col items-center pr-[10px]">
      <p className="whitespace-nowrap font-['Noto_Sans_CJK_SC',sans-serif] text-[33px] font-medium leading-[48px] text-[#1c1c1c]">精选手游网</p>
      <div className="flex w-full items-center gap-[3px] pl-[2px]">
        <span className="h-[2px] flex-1 bg-[#333]" />
        <a href="#site" className="font-['Open_Sans',sans-serif] text-[10px] font-semibold leading-[12px] text-[#333]">www.tzymjx.net</a>
        <span className="h-[2px] flex-1 bg-[#333]" />
      </div>
    </div>
  </aside>
);

const App = () => (
  <div className="flex h-screen flex-col overflow-hidden bg-[#e9ebfb] text-black">
    <div className="flex h-[23px] shrink-0 items-center gap-[5px] bg-white pl-[2px]">
      <svg width="16" height="16" viewBox="0 0 16 16" aria-hidden="true">
        <path d="M3 .5h12.500v12H3z" fill="#eaf2ff" stroke="#2f62b8" />
        <path d="M7 0v5M11 0v12M12 4h4M12 8h4" stroke="#7da6e0" />
        <circle cx="7" cy="9" r="6.500" fill="#d9604e" stroke="#8e2a20" />
        <circle cx="6" cy="8" r="4" fill="#eb9a8a" />
        <path d="M3 12l8-7" stroke="#b43c2e" strokeWidth="1.500" />
      </svg>
      <span className="font-['Open_Sans',sans-serif] text-[13px] leading-[20px]">OriginPro 2020 (Expired) 64-bit - UNTITLED *</span>
    </div>

    <nav className="flex h-[24px] shrink-0 items-center bg-[#ecedfb]">
      <Grip dots={4} />
      <div className="flex gap-[15px] pl-[7px] font-['Open_Sans',sans-serif] text-[11px]">
        {menus.map(([before, key, after]) => (
          <button key={before + key + after} type="button" className="whitespace-nowrap">
            {before}
            <u className="underline-offset-2">{key}</u>
            {after}
          </button>
        ))}
      </div>
    </nav>

    <div className="flex shrink-0 flex-col">
      <StandardBar />
      <FormatBar />
    </div>

    <div className="flex min-h-0 flex-1">
      <div className="flex w-[22px] shrink-0 flex-col gap-[13px]">
        <DockTab label="Project Explorer (1)" className="h-[151px]" />
        <DockTab label="Messages Log" className="h-[102px]" />
        <DockTab label="Smart Hint Log" className="h-[113px]" />
      </div>
      <div className="flex shrink-0 pt-[2px]">
        <SideBars />
      </div>
      <main className="relative min-w-0 flex-1 overflow-hidden border-l-2 border-t-2 border-[#6c6c6c] bg-[#ababab]">
        <BookWindow />
        <svg width="90" height="100" viewBox="0 0 90 100" className="absolute left-[244px] top-[288px]" aria-hidden="true">
          <defs>
            <filter id="soft" x="-20%" y="-20%" width="150%" height="150%">
              <feGaussianBlur stdDeviation="1.5" />
            </filter>
          </defs>
          <path d="M12 91L60 30L55 28L77 12L67 36L64 32L15 92z" fill="#222" opacity="0.55" filter="url(#soft)" />
          <path d="M9.500 87L57 26L52 23.500L74 7.500L63 32L60.500 28L12 89z" fill="#fa0000" stroke="#8a1010" strokeWidth="0.500" />
        </svg>
        <Watermark />
      </main>
    </div>
  </div>
);

export default App;
